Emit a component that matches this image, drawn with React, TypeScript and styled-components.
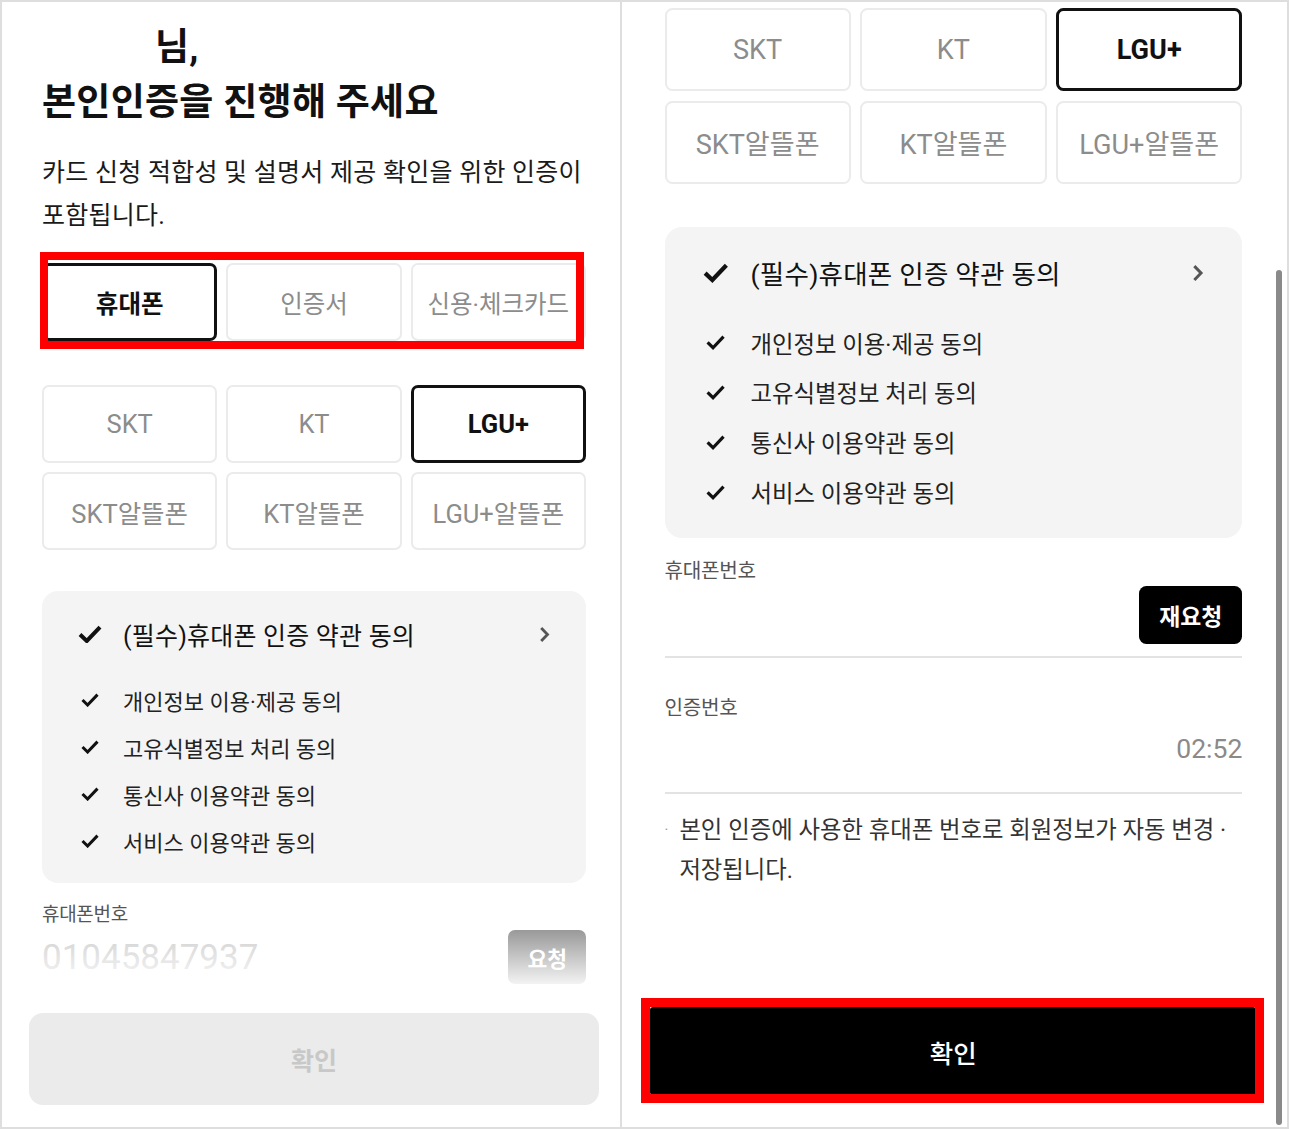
import styled, { createGlobalStyle } from 'styled-components';

const GlobalStyle = createGlobalStyle`
  html, body {
    margin: 0;
    padding: 0;
    background: #fff;
  }
  body {
    font-family: Roboto, "Noto Sans CJK KR", sans-serif;
    color: #111;
  }
  * {
    box-sizing: border-box;
  }
  button {
    font-family: inherit;
    cursor: pointer;
  }
`;

const Frame = styled.div`
  width: 1289px;
  height: 1129px;
  border: 2px solid #dedede;
  display: flex;
  background: #fff;
  overflow: hidden;
`;

const LeftPanel = styled.section`
  width: 620px;
  height: 100%;
  border-right: 2px solid #dedede;
  overflow: hidden;
`;

const RightPanel = styled.section`
  flex: 1;
  height: 100%;
  position: relative;
  overflow: hidden;
`;

const Screen = styled.div<{ $zoom?: number; $height: number; $top: number; $right: number }>`
  zoom: ${(p) => p.$zoom ?? 1};
  height: ${(p) => p.$height}px;
  padding: ${(p) => p.$top}px ${(p) => p.$right}px 0 40px;
  display: flex;
  flex-direction: column;
`;

const Scrollbar = styled.div`
  position: absolute;
  top: 268px;
  right: 5px;
  bottom: 2px;
  width: 6px;
  border-radius: 3px;
  background: #8a8a8a;
`;

const Greeting = styled.h1`
  margin: 0;
  font-size: 37px;
  font-weight: 700;
  line-height: 55px;
  letter-spacing: 0.3px;
  color: #111;
`;

const NameMask = styled.span`
  display: inline-block;
  width: 113px;
`;

const Intro = styled.p`
  margin: 21px 0 0;
  font-size: 25px;
  line-height: 43px;
  letter-spacing: 0.25px;
  color: #1a1a1a;
  word-break: keep-all;
`;

const OptionGrid = styled.div<{ $mt: number }>`
  position: relative;
  margin-top: ${(p) => p.$mt}px;
  display: grid;
  grid-template-columns: repeat(3, 1fr);
  gap: 9px;
`;

const OptionButton = styled.button<{ $active?: boolean; $size?: number }>`
  height: 78px;
  padding: 0;
  border-radius: 7px;
  background: #fff;
  font-size: ${(p) => p.$size ?? 25.5}px;
  white-space: nowrap;
  border: ${(p) => (p.$active ? '3px solid #111' : '2px solid #ebebeb')};
  color: ${(p) => (p.$active ? '#111' : '#8c8c8c')};
  font-weight: ${(p) => (p.$active ? 700 : 400)};
`;

const Highlight = styled.span<{ $inset: string; $w: number }>`
  position: absolute;
  inset: ${(p) => p.$inset};
  border: ${(p) => p.$w}px solid #ff0000;
  pointer-events: none;
`;

const TermsCard = styled.div`
  margin-top: 41px;
  height: 292px;
  padding: 27px 36px 19px 36px;
  border-radius: 16px;
  background: #f4f4f4;
`;

const TermsHeader = styled.div`
  display: flex;
  align-items: center;
  height: 32px;
`;

const CheckSlot = styled.span`
  width: 24px;
  flex: none;
  display: flex;
  align-items: center;
  justify-content: center;
`;

const TermsTitle = styled.span`
  flex: 1;
  margin-left: 21px;
  font-size: 25px;
  letter-spacing: 0.2px;
  color: #111;
`;

const TermsList = styled.ul`
  margin: 26px 0 0;
  padding: 0;
  list-style: none;
`;

const TermsItem = styled.li`
  display: flex;
  align-items: center;
  height: 47px;
`;

const ItemText = styled.span`
  margin-left: 21px;
  font-size: 22px;
  color: #222;
`;

const FieldLabel = styled.div<{ $mt: number }>`
  margin-top: ${(p) => p.$mt}px;
  font-size: 19px;
  line-height: 24px;
  letter-spacing: -0.3px;
  color: #555;
`;

const FieldRow = styled.div<{ $h: number; $pb?: number }>`
  position: relative;
  margin-top: 3px;
  height: ${(p) => p.$h + (p.$pb ?? 0)}px;
  display: flex;
  align-items: center;
  justify-content: space-between;
  padding-bottom: ${(p) => p.$pb ?? 0}px;
  border-bottom: ${(p) => (p.$pb ? '2px solid #e3e3e3' : 'none')};
`;

const PhoneValue = styled.span`
  font-size: 35px;
  color: #afafaf;
`;

const RequestButton = styled.button<{ $bg: string }>`
  margin-left: auto;
  height: 54px;
  padding: 0 19px;
  border: none;
  border-radius: 7px;
  background: ${(p) => p.$bg};
  color: #fff;
  font-size: 21.5px;
  font-weight: 700;
`;

const Fade = styled.div`
  position: absolute;
  inset: 0 -6px -4px -6px;
  background: linear-gradient(rgba(255, 255, 255, 0.4), rgba(255, 255, 255, 0.97));
  pointer-events: none;
`;

const Timer = styled.span`
  margin-left: auto;
  font-size: 25px;
  color: #8a8a8a;
`;

const Notice = styled.div`
  display: flex;
  margin-top: 15px;
  font-size: 22px;
  line-height: 38px;
  color: #333;
`;

const Bullet = styled.span`
  width: 14px;
  flex: none;
  color: #999;
  font-size: 14px;
`;

const NoticeText = styled.p`
  margin: 0;
  word-break: keep-all;
`;

const Footer = styled.div<{ $bottom: number; $left: number; $right: number }>`
  position: relative;
  margin: auto ${(p) => p.$right}px ${(p) => p.$bottom}px ${(p) => p.$left}px;
`;

const ConfirmButton = styled.button<{ $enabled?: boolean; $h: number }>`
  display: block;
  width: 100%;
  height: ${(p) => p.$h}px;
  border: none;
  border-radius: ${(p) => (p.$enabled ? 3 : 14)}px;
  background: ${(p) => (p.$enabled ? '#000' : '#ebebeb')};
  color: ${(p) => (p.$enabled ? '#fff' : '#c8c8c8')};
  font-size: ${(p) => (p.$enabled ? 24 : 25)}px;
  font-weight: ${(p) => (p.$enabled ? 500 : 700)};
`;

const Check = ({ big }: { big?: boolean }) =>
  big ? (
    <svg width="24" height="18" viewBox="0 0 24 18">
      <path d="M2 9.5 L8.8 16 L22 2.2" fill="none" stroke="#111" strokeWidth="4" />
    </svg>
  ) : (
    <svg width="18" height="14" viewBox="0 0 18 14">
      <path d="M1.5 7 L6.6 12 L16.5 1.6" fill="none" stroke="#111" strokeWidth="3" />
    </svg>
  );

const Chevron = () => (
  <svg width="11" height="17" viewBox="0 0 11 17">
    <path d="M2.2 2 L8.5 8.5 L2.2 15" fill="none" stroke="#555" strokeWidth="2.8" />
  </svg>
);

const carriers = ['SKT', 'KT', 'LGU+', 'SKT알뜰폰', 'KT알뜰폰', 'LGU+알뜰폰'];
const terms = ['개인정보 이용·제공 동의', '고유식별정보 처리 동의', '통신사 이용약관 동의', '서비스 이용약관 동의'];

const CarrierGrid = ({ mt }: { mt: number }) => (
  <OptionGrid $mt={mt}>
    {carriers.map((c) => (
      <OptionButton key={c} $active={c === 'LGU+'}>
        {c}
      </OptionButton>
    ))}
  </OptionGrid>
);

const Terms = () => (
  <TermsCard>
    <TermsHeader>
      <CheckSlot>
        <Check big />
      </CheckSlot>
      <TermsTitle>(필수)휴대폰 인증 약관 동의</TermsTitle>
      <Chevron />
    </TermsHeader>
    <TermsList>
      {terms.map((t) => (
        <TermsItem key={t}>
          <CheckSlot>
            <Check />
          </CheckSlot>
          <ItemText>{t}</ItemText>
        </TermsItem>
      ))}
    </TermsList>
  </TermsCard>
);

export default function App() {
  return (
    <>
      <GlobalStyle />
      <Frame>
        <LeftPanel>
          <Screen $height={1125} $top={18} $right={34}>
            <Greeting>
              <NameMask />
              님,
              <br />
              본인인증을 진행해 주세요
            </Greeting>
            <Intro>카드 신청 적합성 및 설명서 제공 확인을 위한 인증이 포함됩니다.</Intro>
            <OptionGrid $mt={26}>
              <OptionButton $active $size={24.5}>
                휴대폰
              </OptionButton>
              <OptionButton $size={24.5}>인증서</OptionButton>
              <OptionButton $size={24.5}>신용·체크카드</OptionButton>
              <Highlight $inset="-11px 2px -8px -2px" $w={8} />
            </OptionGrid>
            <CarrierGrid mt={44} />
            <Terms />
            <FieldLabel $mt={20}>휴대폰번호</FieldLabel>
            <FieldRow $h={54}>
              <PhoneValue>01045847937</PhoneValue>
              <RequestButton $bg="#555">요청</RequestButton>
              <Fade />
            </FieldRow>
            <Footer $bottom={22} $left={-13} $right={-13}>
              <ConfirmButton $h={92}>확인</ConfirmButton>
            </Footer>
          </Screen>
        </LeftPanel>
        <RightPanel>
          <Screen $zoom={1.0625} $height={1059} $top={6} $right={42}>
            <CarrierGrid mt={0} />
            <Terms />
            <FieldLabel $mt={20}>휴대폰번호</FieldLabel>
            <FieldRow $h={54} $pb={12}>
              <RequestButton $bg="#000">재요청</RequestButton>
            </FieldRow>
            <FieldLabel $mt={36}>인증번호</FieldLabel>
            <FieldRow $h={47} $pb={18}>
              <Timer>02:52</Timer>
            </FieldRow>
            <Notice>
              <Bullet>·</Bullet>
              <NoticeText>본인 인증에 사용한 휴대폰 번호로 회원정보가 자동 변경 · 저장됩니다.</NoticeText>
            </Notice>
            <Footer $bottom={30} $left={-13.5} $right={-13}>
              <ConfirmButton $enabled $h={83}>
                확인
              </ConfirmButton>
              <Highlight $inset="-8.5px -7.5px -7.5px -8.5px" $w={8.5} />
            </Footer>
          </Screen>
          <Scrollbar />
        </RightPanel>
      </Frame>
    </>
  );
}
